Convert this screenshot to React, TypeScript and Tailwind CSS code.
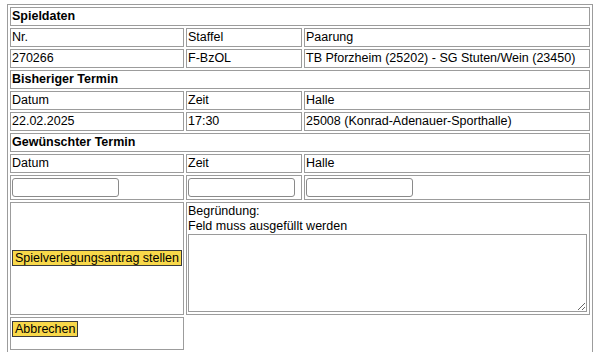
import React from 'react';

const cell = 'border border-[#9c9c9c] px-px py-px leading-[15px] text-left align-middle';
const head = 'border border-[#9c9c9c] px-px py-px leading-[15px] text-left font-bold';
const btn = 'bg-[#f8d84a] border border-[#3a3a3a] px-[2px] leading-[14px] text-black text-[12.5px] font-["Liberation_Sans",Arial,sans-serif]';
const field = 'block w-[107px] h-[19px] border border-[#8a8a8a] rounded-[3px] bg-white';
const fieldCell = 'border border-[#9c9c9c] px-px pt-[2px] pb-[2px]';

export default function App() {
  return (
    <div className="h-[352px] overflow-hidden bg-white pt-[4px] pl-[7px] font-['Liberation_Sans',Arial,sans-serif] text-[12.5px] text-black">
      <table className="border-separate border-spacing-[2px] border border-[#9c9c9c] w-[586px] table-fixed">
        <colgroup>
          <col className="w-[174px]" />
          <col className="w-[116px]" />
          <col />
        </colgroup>
        <tbody>
          <tr>
            <th colSpan={3} className={head}>Spieldaten</th>
          </tr>
          <tr>
            <td className={cell}>Nr.</td>
            <td className={cell}>Staffel</td>
            <td className={cell}>Paarung</td>
          </tr>
          <tr>
            <td className={cell}>270266</td>
            <td className={cell}>F-BzOL</td>
            <td className={cell}>TB Pforzheim (25202) - SG Stuten/Wein (23450)</td>
          </tr>
          <tr>
            <th colSpan={3} className={head}>Bisheriger Termin</th>
          </tr>
          <tr>
            <td className={cell}>Datum</td>
            <td className={cell}>Zeit</td>
            <td className={cell}>Halle</td>
          </tr>
          <tr>
            <td className={cell}>22.02.2025</td>
            <td className={cell}>17:30</td>
            <td className={cell}>25008 (Konrad-Adenauer-Sporthalle)</td>
          </tr>
          <tr>
            <th colSpan={3} className={head}>Gewünschter Termin</th>
          </tr>
          <tr>
            <td className={cell}>Datum</td>
            <td className={cell}>Zeit</td>
            <td className={cell}>Halle</td>
          </tr>
          <tr>
            <td className={fieldCell}>
              <input type="text" className={field} />
            </td>
            <td className={fieldCell}>
              <input type="text" className={field} />
            </td>
            <td className={fieldCell}>
              <input type="text" className={field} />
            </td>
          </tr>
          <tr>
            <td className="border border-[#9c9c9c] p-px align-middle">
              <button className={btn}>Spielverlegungsantrag stellen</button>
            </td>
            <td colSpan={2} className="border border-[#9c9c9c] p-px align-top leading-[14.5px]">
              <div>Begründung:</div>
              <div>Feld muss ausgefüllt werden</div>
              <textarea className="block mt-px mb-px w-[399px] h-[78px] border border-[#9a9a9a] bg-white resize-y" />
            </td>
          </tr>
          <tr>
            <td className="border border-[#9c9c9c] p-px align-top">
              <div className="h-[29px] pt-px">
                <button className={btn}>Abbrechen</button>
              </div>
            </td>
            <td colSpan={2} />
          </tr>
        </tbody>
      </table>
    </div>
  );
}
